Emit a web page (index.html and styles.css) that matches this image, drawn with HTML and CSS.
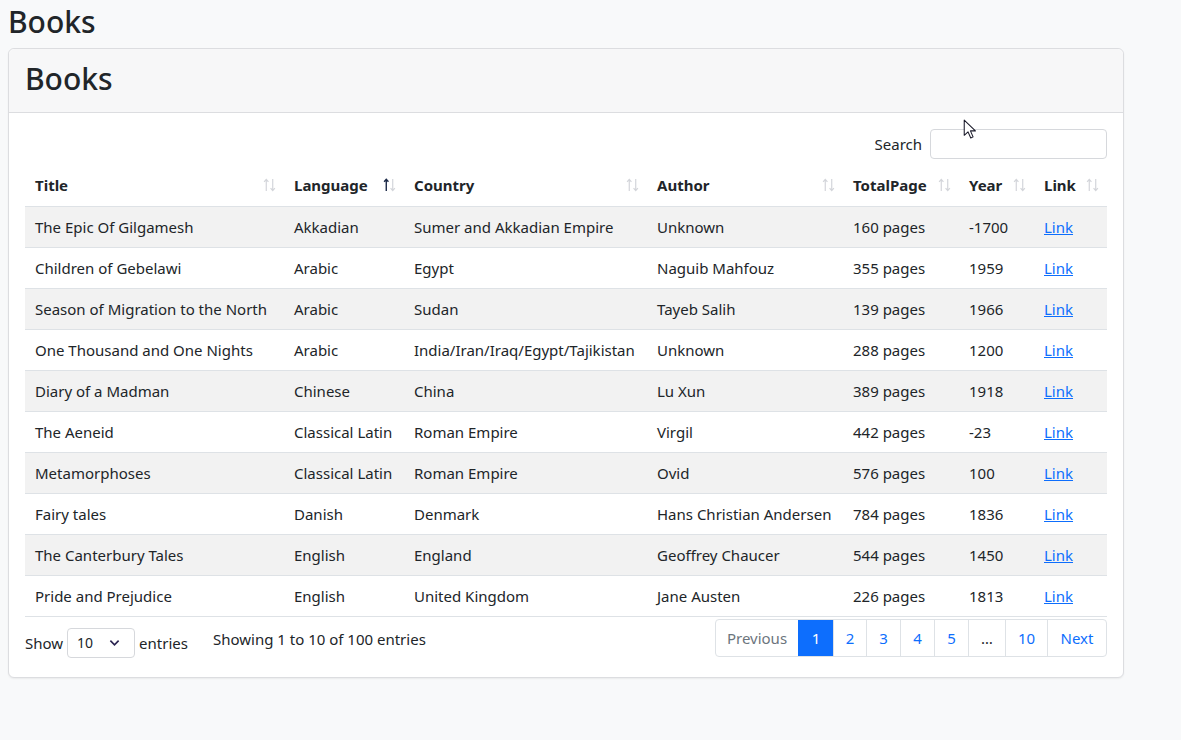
FILE: index.html
```html
<!DOCTYPE html>
<html lang="en">
<head>
<meta charset="utf-8">
<title>Books</title>
<link rel="stylesheet" href="styles.css">
</head>
<body>
<h1 class="page-title">Books</h1>
<div class="card">
  <div class="card-header"><h1 class="card-title">Books</h1></div>
  <div class="card-body">
    <div class="search-row">
      <label class="search-label" for="q">Search</label>
      <input class="search-input" id="q" type="text">
    </div>
    <table class="books">
      <colgroup>
        <col class="c-title"><col class="c-lang"><col class="c-country"><col class="c-author"><col class="c-pages"><col class="c-year"><col class="c-link">
      </colgroup>
      <thead>
        <tr>
          <th><div class="th-in"><span>Title</span><svg class="sort" viewBox="0 0 12 13"><path class="up" d="M3 12V1.5M1 3.5L3 1.2L5 3.5"/><path class="down" d="M9 1V11.5M7 9.5L9 11.8L11 9.5"/></svg></div></th>
          <th><div class="th-in"><span>Language</span><svg class="sort asc" viewBox="0 0 12 13"><path class="up" d="M3 12V1.5M1 3.5L3 1.2L5 3.5"/><path class="down" d="M9 1V11.5M7 9.5L9 11.8L11 9.5"/></svg></div></th>
          <th><div class="th-in"><span>Country</span><svg class="sort" viewBox="0 0 12 13"><path class="up" d="M3 12V1.5M1 3.5L3 1.2L5 3.5"/><path class="down" d="M9 1V11.5M7 9.5L9 11.8L11 9.5"/></svg></div></th>
          <th><div class="th-in"><span>Author</span><svg class="sort" viewBox="0 0 12 13"><path class="up" d="M3 12V1.5M1 3.5L3 1.2L5 3.5"/><path class="down" d="M9 1V11.5M7 9.5L9 11.8L11 9.5"/></svg></div></th>
          <th><div class="th-in"><span>TotalPage</span><svg class="sort" viewBox="0 0 12 13"><path class="up" d="M3 12V1.5M1 3.5L3 1.2L5 3.5"/><path class="down" d="M9 1V11.5M7 9.5L9 11.8L11 9.5"/></svg></div></th>
          <th><div class="th-in"><span>Year</span><svg class="sort" viewBox="0 0 12 13"><path class="up" d="M3 12V1.5M1 3.5L3 1.2L5 3.5"/><path class="down" d="M9 1V11.5M7 9.5L9 11.8L11 9.5"/></svg></div></th>
          <th><div class="th-in"><span>Link</span><svg class="sort" viewBox="0 0 12 13"><path class="up" d="M3 12V1.5M1 3.5L3 1.2L5 3.5"/><path class="down" d="M9 1V11.5M7 9.5L9 11.8L11 9.5"/></svg></div></th>
        </tr>
      </thead>
      <tbody>
        <tr><td>The Epic Of Gilgamesh</td><td>Akkadian</td><td>Sumer and Akkadian Empire</td><td>Unknown</td><td>160 pages</td><td>-1700</td><td><a href="#">Link</a></td></tr>
        <tr><td>Children of Gebelawi</td><td>Arabic</td><td>Egypt</td><td>Naguib Mahfouz</td><td>355 pages</td><td>1959</td><td><a href="#">Link</a></td></tr>
        <tr><td>Season of Migration to the North</td><td>Arabic</td><td>Sudan</td><td>Tayeb Salih</td><td>139 pages</td><td>1966</td><td><a href="#">Link</a></td></tr>
        <tr><td>One Thousand and One Nights</td><td>Arabic</td><td>India/Iran/Iraq/Egypt/Tajikistan</td><td>Unknown</td><td>288 pages</td><td>1200</td><td><a href="#">Link</a></td></tr>
        <tr><td>Diary of a Madman</td><td>Chinese</td><td>China</td><td>Lu Xun</td><td>389 pages</td><td>1918</td><td><a href="#">Link</a></td></tr>
        <tr><td>The Aeneid</td><td>Classical Latin</td><td>Roman Empire</td><td>Virgil</td><td>442 pages</td><td>-23</td><td><a href="#">Link</a></td></tr>
        <tr><td>Metamorphoses</td><td>Classical Latin</td><td>Roman Empire</td><td>Ovid</td><td>576 pages</td><td>100</td><td><a href="#">Link</a></td></tr>
        <tr><td>Fairy tales</td><td>Danish</td><td>Denmark</td><td>Hans Christian Andersen</td><td>784 pages</td><td>1836</td><td><a href="#">Link</a></td></tr>
        <tr><td>The Canterbury Tales</td><td>English</td><td>England</td><td>Geoffrey Chaucer</td><td>544 pages</td><td>1450</td><td><a href="#">Link</a></td></tr>
        <tr><td>Pride and Prejudice</td><td>English</td><td>United Kingdom</td><td>Jane Austen</td><td>226 pages</td><td>1813</td><td><a href="#">Link</a></td></tr>
      </tbody>
    </table>
    <div class="table-footer">
      <div class="length">
        <span>Show</span>
        <div class="select"><span>10</span><svg class="chev" viewBox="0 0 12 8"><path d="M1.5 1.5L6 6L10.5 1.5"/></svg></div>
        <span>entries</span>
      </div>
      <div class="info">Showing 1 to 10 of 100 entries</div>
      <ul class="pagination">
        <li class="page disabled">Previous</li>
        <li class="page active">1</li>
        <li class="page">2</li>
        <li class="page">3</li>
        <li class="page">4</li>
        <li class="page">5</li>
        <li class="page ellipsis">…</li>
        <li class="page">10</li>
        <li class="page">Next</li>
      </ul>
    </div>
  </div>
</div>
<svg class="cursor" viewBox="0 0 12 19"><path d="M1 1V15.5L4.6 12.2L7.2 18L9.4 17L6.9 11.3H11.6Z"/></svg>
</body>
</html>
```
FILE: styles.css
```css
* { box-sizing: border-box; }
html, body { margin: 0; padding: 0; }
body {
  background: #f8f9fa;
  color: #212529;
  font-family: "Noto Sans", "Open Sans", sans-serif;
  font-size: 16px;
  line-height: 24px;
  padding: 0 8px;
  position: relative;
  min-height: 740px;
}
.page-title {
  margin: 0 0 6px 0;
  font-size: 30px;
  font-weight: 500;
  line-height: 40px;
  padding-top: 2px;
}
.card {
  width: 1116px;
  background: #fff;
  border: 1px solid #dcdde0;
  border-radius: 6px;
  box-shadow: 0 1px 2px rgba(0,0,0,0.06);
}
.card-header {
  background: #f7f7f8;
  border-bottom: 1px solid #dcdde0;
  border-radius: 6px 6px 0 0;
  padding: 10px 16px 13px;
  height: 64px;
}
.card-title {
  margin: 0;
  font-size: 30px;
  font-weight: 500;
  line-height: 40px;
}
.card-body { padding: 16px 16px 19px; }
.search-row {
  display: flex;
  justify-content: flex-end;
  align-items: center;
  gap: 8px;
  margin-bottom: 8px;
}
.search-label { font-size: 15px; }
.search-input {
  width: 177px;
  height: 30px;
  border: 1px solid #d6d8dc;
  border-radius: 4px;
  background: #fff;
  margin: 0;
}
table.books {
  width: 1082px;
  border-collapse: collapse;
  table-layout: fixed;
  font-size: 15px;
}
.c-title { width: 259px; }
.c-lang { width: 120px; }
.c-country { width: 243px; }
.c-author { width: 196px; }
.c-pages { width: 116px; }
.c-year { width: 75px; }
.c-link { width: 73px; }
th {
  text-align: left;
  font-weight: 700;
  padding: 6px 8px 8px 10px;
  border-bottom: 1px solid #dee2e6;
  height: 39px;
}
.th-in {
  display: flex;
  justify-content: space-between;
  align-items: center;
  gap: 6px;
  white-space: nowrap;
}
.sort {
  width: 13px;
  height: 14px;
  flex: none;
}
.sort path {
  fill: none;
  stroke: #d3d5da;
  stroke-width: 1.1;
}
.sort.asc .up { stroke: #1c2a48; stroke-width: 1.3; }
td {
  padding: 8px 10px;
  height: 41px;
  border-bottom: 1px solid #dee2e6;
  white-space: nowrap;
  overflow: hidden;
}
tbody tr:nth-child(odd) td { background: #f2f2f2; }
td a { color: #0d6efd; text-decoration: underline; }
.table-footer {
  display: flex;
  align-items: center;
  margin-top: 2px;
  font-size: 15px;
}
.length {
  display: flex;
  align-items: center;
  gap: 4px;
  margin-top: 9px;
}
.select {
  width: 68px;
  height: 30px;
  border: 1px solid #d6d8dc;
  border-radius: 4px;
  display: flex;
  align-items: center;
  justify-content: space-between;
  padding: 0 14px 0 9px;
  font-size: 14px;
}
.chev { width: 11px; height: 8px; }
.chev path { fill: none; stroke: #2a2350; stroke-width: 1.8; }
.info { margin-left: 25px; margin-top: 1px; }
.pagination {
  list-style: none;
  margin: 0 0 0 auto;
  padding: 0;
  display: flex;
  border: 1px solid #dee2e6;
  border-radius: 4px;
  overflow: hidden;
}
.page {
  padding: 6px 0;
  height: 36px;
  text-align: center;
  color: #0d6efd;
  border-left: 1px solid #dee2e6;
  width: 34px;
  font-size: 15px;
}
.page:nth-child(1) { width: 82px; border-left: 0; }
.page:nth-child(2) { width: 35px; }
.page:nth-child(3) { width: 33px; }
.page:nth-child(7) { width: 37px; }
.page:nth-child(8) { width: 42px; }
.page:nth-child(9) { width: 59px; }
.page.disabled { color: #6c757d; }
.page.active { background: #0d6efd; color: #fff; border-left-color: #0d6efd; }
.page.ellipsis { color: #212529; }
.cursor {
  position: absolute;
  left: 963px;
  top: 119px;
  width: 13px;
  height: 20px;
}
.cursor path { fill: #fff; stroke: #1a1a2a; stroke-width: 1; stroke-linejoin: round; }
```
